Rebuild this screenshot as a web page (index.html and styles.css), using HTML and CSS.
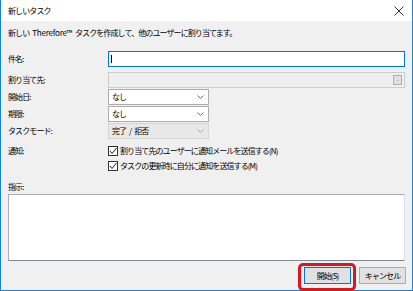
FILE: index.html
```html
<!DOCTYPE html>
<html lang="ja">
<head>
<meta charset="utf-8">
<link rel="stylesheet" href="styles.css">
</head>
<body>
<div class="window">
  <div class="titlebar">
    <span class="title">新しいタスク</span>
    <svg class="close" width="10" height="10" viewBox="0 0 10 10"><path d="M0.5 0.5 L9.5 9.5 M9.5 0.5 L0.5 9.5" stroke="#333" stroke-width="1" fill="none"/></svg>
  </div>
  <div class="content">
    <p class="desc">新しい <span class="lat">Therefore™</span> タスクを作成して、他のユーザーに割り当てます。</p>
    <div class="form">
      <label class="lbl r1">件名:</label>
      <div class="input focus r1"><span class="caret"></span></div>
      <label class="lbl r2">割り当て先:</label>
      <div class="input disabled r2"><span class="dots">-</span></div>
      <label class="lbl r3">開始日:</label>
      <div class="select r3"><span>なし</span><svg width="7" height="4" viewBox="0 0 7 4"><path d="M0.5 0.5 L3.5 3.5 L6.5 0.5" stroke="#666" fill="none"/></svg></div>
      <label class="lbl r4">期限:</label>
      <div class="select r4"><span>なし</span><svg width="7" height="4" viewBox="0 0 7 4"><path d="M0.5 0.5 L3.5 3.5 L6.5 0.5" stroke="#666" fill="none"/></svg></div>
      <label class="lbl r5">タスクモード:</label>
      <div class="select sdisabled r5"><span>完了 / 拒否</span><svg width="7" height="4" viewBox="0 0 7 4"><path d="M0.5 0.5 L3.5 3.5 L6.5 0.5" stroke="#aaa" fill="none"/></svg></div>
      <label class="lbl r6">通知:</label>
      <div class="checks r6">
        <div class="check"><span class="box"><svg width="8" height="8" viewBox="0 0 8 8"><path d="M1 4 L3 6.5 L7.5 1" stroke="#222" stroke-width="1" fill="none"/></svg></span>割り当て先のユーザーに通知メールを送信する(N)</div>
        <div class="check"><span class="box"><svg width="8" height="8" viewBox="0 0 8 8"><path d="M1 4 L3 6.5 L7.5 1" stroke="#222" stroke-width="1" fill="none"/></svg></span>タスクの更新時に自分に通知を送信する(M)</div>
      </div>
    </div>
    <div class="lbl instr">指示:</div>
    <div class="textarea"></div>
    <div class="buttons">
      <button class="btn default">開始(S)<span class="highlight"></span></button>
      <button class="btn">キャンセル</button>
    </div>
  </div>
</div>
</body>
</html>
```
FILE: styles.css
```css
html, body {
  margin: 0;
  padding: 0;
  background: #ffffff;
}
body {
  font-family: "Noto Sans CJK JP", "Noto Sans", sans-serif;
  font-size: 8px;
  color: #000;
  letter-spacing: -0.9px;
  word-spacing: 2px;
}
.lat {
  letter-spacing: -0.2px;
}
.window {
  width: 413px;
  height: 291px;
  box-sizing: border-box;
  border: 1px solid #1883d7;
  border-top: none;
  background: #f0f0f0;
  display: flex;
  flex-direction: column;
}
.titlebar {
  height: 21px;
  background: #fff;
  display: flex;
  align-items: center;
  justify-content: space-between;
  padding: 0 7px 0 7px;
}
.title {
  line-height: 10px;
}
.close {
  margin-right: 1px;
}
.content {
  flex: 1;
  padding: 0 6px 0 7px;
  display: flex;
  flex-direction: column;
  position: relative;
}
.desc {
  margin: 7px 0 0 0;
  line-height: 10px;
  height: 10px;
}
.form {
  margin-top: 13px;
  display: grid;
  grid-template-columns: 100px 297px;
  row-gap: 1px;
  align-items: center;
}
.lbl {
  line-height: 10px;
}
.r1 { margin-bottom: 4px; }
.input {
  height: 16px;
  box-sizing: border-box;
  border: 1px solid #abadb3;
  background: #fff;
  position: relative;
}
.input.focus {
  border-color: #0078d7;
}
.caret {
  position: absolute;
  left: 2px;
  top: 3px;
  width: 1px;
  height: 8px;
  background: #000;
}
.input.disabled {
  background: #f0f0f0;
  border-color: #cccccc;
  display: flex;
  justify-content: flex-end;
  align-items: center;
  padding-right: 2px;
}
.dots {
  width: 9px;
  height: 10px;
  box-sizing: border-box;
  border: 1px solid #adadad;
  background: #e1e1e1;
  font-size: 6px;
  line-height: 8px;
  text-align: center;
  color: #777;
  letter-spacing: 0;
}
.select {
  width: 101px;
  height: 16px;
  box-sizing: border-box;
  border: 1px solid #acacac;
  background: #fff;
  display: flex;
  align-items: center;
  justify-content: space-between;
  padding: 0 4px 0 3px;
  line-height: 10px;
}
.select.sdisabled {
  background: #e8e8e8;
  border-color: #d5d5d5;
  color: #000;
}
.checks.r6 { margin-top: 6px; }
.lbl.r6 { align-self: start; margin-top: 6px; }
.checks {
  display: flex;
  flex-direction: column;
  gap: 5px;
}
.check {
  display: flex;
  align-items: center;
  line-height: 10px;
  height: 10px;
}
.box {
  width: 10px;
  height: 10px;
  box-sizing: border-box;
  border: 1px solid #333;
  background: #fff;
  display: flex;
  align-items: center;
  justify-content: center;
  margin-right: 2px;
}
.instr {
  margin-top: 11px;
}
.textarea {
  margin-top: 2px;
  width: 397px;
  height: 67px;
  box-sizing: border-box;
  border: 1px solid #828790;
  border-color: #abadb3 #dbdfe6 #828790 #abadb3;
  background: #fff;
}
.buttons {
  display: flex;
  justify-content: flex-end;
  gap: 8px;
  margin-top: 6px;
  padding-right: 0;
}
.btn {
  width: 47px;
  height: 17px;
  box-sizing: border-box;
  border: 1px solid #adadad;
  background: #e1e1e1;
  font-family: "Noto Sans CJK JP", "Noto Sans", sans-serif;
  font-size: 8px;
  letter-spacing: -0.9px;
  padding: 0;
  color: #000;
  position: relative;
}
.btn.default {
  border-color: #0078d7;
}
.highlight {
  position: absolute;
  left: -7px;
  top: -5px;
  width: 58px;
  height: 28px;
  box-sizing: border-box;
  border: 3px solid #e0141e;
  border-radius: 5px;
}
```
